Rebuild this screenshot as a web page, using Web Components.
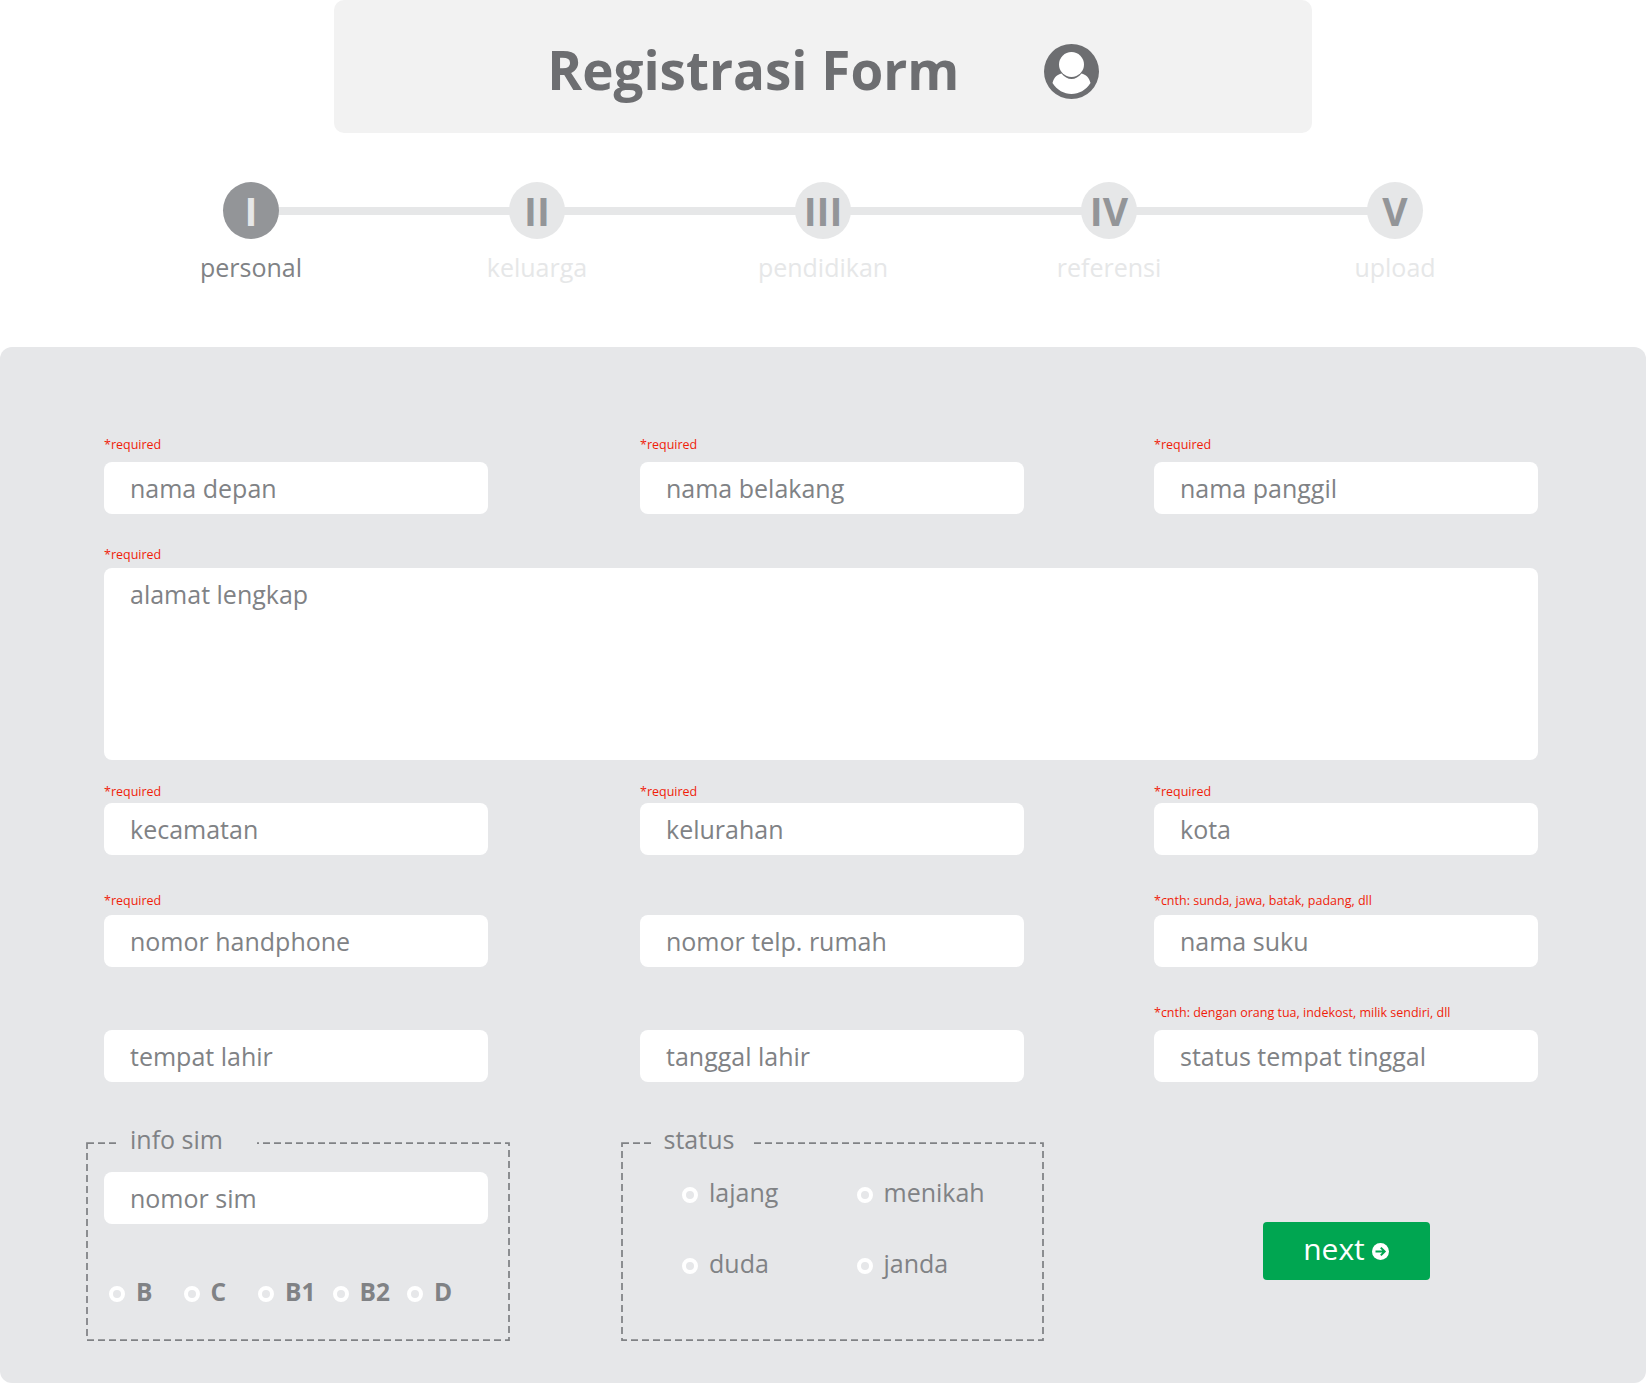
<!DOCTYPE html>
<html lang="id">
<head>
<meta charset="utf-8">
<title>Registrasi Form</title>
<style>
  html, body { margin: 0; background: #fff; }
  body { font-family: "Open Sans", "Liberation Sans", sans-serif; color: #808285; }
</style>
</head>
<body>
<reg-header>Registrasi Form</reg-header>

<reg-stepper>
  <reg-step num="I" active>personal</reg-step>
  <reg-step num="II">keluarga</reg-step>
  <reg-step num="III">pendidikan</reg-step>
  <reg-step num="IV">referensi</reg-step>
  <reg-step num="V">upload</reg-step>
</reg-stepper>

<reg-panel>
  <reg-row style="--row-top: 89px; --hint-gap: 8px">
    <reg-field hint="*required">nama depan</reg-field>
    <reg-field hint="*required">nama belakang</reg-field>
    <reg-field hint="*required">nama panggil</reg-field>
  </reg-row>
  <reg-row style="--row-top: 32px; --hint-gap: 4px">
    <reg-field hint="*required" multiline style="grid-column: 1 / -1">alamat lengkap</reg-field>
  </reg-row>
  <reg-row style="--row-top: 23px; --hint-gap: 2px">
    <reg-field hint="*required">kecamatan</reg-field>
    <reg-field hint="*required">kelurahan</reg-field>
    <reg-field hint="*required">kota</reg-field>
  </reg-row>
  <reg-row style="--row-top: 37px; --hint-gap: 5px">
    <reg-field hint="*required">nomor handphone</reg-field>
    <reg-field>nomor telp. rumah</reg-field>
    <reg-field hint="*cnth: sunda, jawa, batak, padang, dll">nama suku</reg-field>
  </reg-row>
  <reg-row style="--row-top: 37px; --hint-gap: 8px">
    <reg-field>tempat lahir</reg-field>
    <reg-field>tanggal lahir</reg-field>
    <reg-field hint="*cnth: dengan orang tua, indekost, milik sendiri, dll">status tempat tinggal</reg-field>
  </reg-row>
  <reg-row style="--row-top: 61px">
    <reg-group legend="info sim" style="width: 422px; margin-left: -17px; --legend-left: 29px; --legend-pad: 15px 34px 0 14px">
      <reg-field style="margin: 29px 0 0 17px; --hint-h: 0px; --hint-gap: 0px">nomor sim</reg-field>
      <reg-radios style="margin: 50px 0 0 22px; --cols: repeat(5, 74.5px); --dot-gap: 11px">
        <reg-radio bold>B</reg-radio>
        <reg-radio bold>C</reg-radio>
        <reg-radio bold>B1</reg-radio>
        <reg-radio bold>B2</reg-radio>
        <reg-radio bold>D</reg-radio>
      </reg-radios>
    </reg-group>
    <reg-group legend="status" style="width: 421px; margin-left: -18.5px; --legend-left: 30px; --legend-pad: 15px 20px 0 12px">
      <reg-radios style="margin: 31px 0 0 60.5px; --cols: repeat(2, 174.5px); --row-gap: 35px; --dot-gap: 11px">
        <reg-radio>lajang</reg-radio>
        <reg-radio>menikah</reg-radio>
        <reg-radio>duda</reg-radio>
        <reg-radio>janda</reg-radio>
      </reg-radios>
    </reg-group>
    <reg-button style="margin-top: 79px">next</reg-button>
  </reg-row>
</reg-panel>

<script>
class RegHeader extends HTMLElement {
  constructor() {
    super();
    this.attachShadow({ mode: "open" });
    this.shadowRoot.innerHTML = `
      <style>
        :host {
          display: flex;
          align-items: center;
          justify-content: center;
          gap: 84.5px;
          box-sizing: border-box;
          width: 978px;
          height: 133px;
          margin: 0 auto;
          background: #f2f2f2;
          border-radius: 10px;
          color: #6d6e71;
          font: 700 53px/1 "Open Sans", sans-serif;
        }
        .title { position: relative; top: 3px; }
        svg { display: block; width: 55px; height: 55px; position: relative; top: 5px; }
      </style>
      <span class="title"><slot></slot></span>
      <svg viewBox="0 0 55 55">
        <circle cx="27.5" cy="27.5" r="27.5" fill="#6d6e71"/>
        <circle cx="27.5" cy="20.5" r="12.5" fill="#fff"/>
        <path fill="#fff" d="M8.5 39C10 33 13 31 17.5 29.5 20 33 24 35 27.5 35 31 35 35 33 37.5 29.5 42 31 45 33 46.5 39 42 46 35 50 27.5 50 20 50 13 46 8.5 39Z"/>
      </svg>
    `;
  }
}

class RegStepper extends HTMLElement {
  constructor() {
    super();
    this.attachShadow({ mode: "open" });
    this.shadowRoot.innerHTML = `
      <style>
        :host {
          display: grid;
          grid-template-columns: repeat(5, 286px);
          justify-content: center;
          padding-top: 49px;
          height: 165px;
        }
      </style>
      <slot></slot>
    `;
  }
}

class RegStep extends HTMLElement {
  constructor() {
    super();
    this.attachShadow({ mode: "open" });
    this.shadowRoot.innerHTML = `
      <style>
        :host {
          display: flex;
          flex-direction: column;
          align-items: center;
          position: relative;
          color: #e6e7e8;
          font: 400 25px/34px "Open Sans", sans-serif;
        }
        :host([active]) { color: #808285; }
        :host(:not(:last-child))::after {
          content: "";
          position: absolute;
          left: 50%;
          width: 100%;
          top: 25px;
          height: 8px;
          background: #e6e7e8;
        }
        .num {
          position: relative;
          z-index: 1;
          width: 56px;
          height: 57px;
          margin-bottom: 11px;
          border-radius: 50%;
          display: flex;
          align-items: center;
          justify-content: center;
          background: #e6e7e8;
          color: #939598;
          font-size: 39px;
          font-weight: 700;
          line-height: 1;
        }
        :host([active]) .num { background: #939598; color: #e6e7e8; }
      </style>
      <div class="num"></div>
      <div><slot></slot></div>
    `;
    this.shadowRoot.querySelector(".num").textContent = this.getAttribute("num");
  }
}

class RegPanel extends HTMLElement {
  constructor() {
    super();
    this.attachShadow({ mode: "open" });
    this.shadowRoot.innerHTML = `
      <style>
        :host {
          display: block;
          box-sizing: border-box;
          height: 1036px;
          padding: 0 108px 0 104px;
          background: #e6e7e9;
          border-radius: 12px;
          overflow: hidden;
        }
      </style>
      <slot></slot>
    `;
  }
}

class RegRow extends HTMLElement {
  constructor() {
    super();
    this.attachShadow({ mode: "open" });
    this.shadowRoot.innerHTML = `
      <style>
        :host {
          display: grid;
          grid-template-columns: 536px 514px 384px;
          margin-top: var(--row-top, 0);
        }
      </style>
      <slot></slot>
    `;
  }
}

class RegField extends HTMLElement {
  constructor() {
    super();
    this.attachShadow({ mode: "open" });
    this.shadowRoot.innerHTML = `
      <style>
        :host { display: block; width: 384px; }
        :host([multiline]) { width: auto; }
        .hint {
          height: var(--hint-h, 18px);
          margin-bottom: var(--hint-gap, 5px);
          color: #f01e0a;
          font: 400 12.5px/18px "Open Sans", sans-serif;
          white-space: nowrap;
        }
        .box {
          box-sizing: border-box;
          height: 52px;
          padding: 0 26px;
          background: #fff;
          border-radius: 8px;
          color: #808285;
          font: 400 25px/52px "Open Sans", sans-serif;
        }
        :host([multiline]) .box { height: 192px; }
      </style>
      <div class="hint"></div>
      <div class="box"><slot></slot></div>
    `;
    this.shadowRoot.querySelector(".hint").textContent = this.getAttribute("hint") || "";
  }
}

class RegGroup extends HTMLElement {
  constructor() {
    super();
    this.attachShadow({ mode: "open" });
    this.shadowRoot.innerHTML = `
      <style>
        :host { display: block; position: relative; height: 197px; }
        svg { position: absolute; inset: 0; width: 100%; height: 100%; overflow: visible; }
        rect { fill: none; stroke: #808285; stroke-width: 1.75; stroke-dasharray: 7 4; }
        .legend {
          position: absolute;
          left: var(--legend-left, 29px);
          top: -21px;
          box-sizing: border-box;
          padding: var(--legend-pad);
          padding-top: 0;
          background: #e6e7e9;
          color: #808285;
          font: 400 25px/34px "Open Sans", sans-serif;
        }
        .body { position: relative; }
      </style>
      <svg><rect x="0" y="0" width="100%" height="100%"></rect></svg>
      <div class="legend"></div>
      <div class="body"><slot></slot></div>
    `;
    this.shadowRoot.querySelector(".legend").textContent = this.getAttribute("legend");
  }
}

class RegRadios extends HTMLElement {
  constructor() {
    super();
    this.attachShadow({ mode: "open" });
    this.shadowRoot.innerHTML = `
      <style>
        :host {
          display: grid;
          grid-template-columns: var(--cols);
          row-gap: var(--row-gap, 0);
        }
      </style>
      <slot></slot>
    `;
  }
}

class RegRadio extends HTMLElement {
  constructor() {
    super();
    this.attachShadow({ mode: "open" });
    this.shadowRoot.innerHTML = `
      <style>
        :host {
          display: flex;
          align-items: center;
          gap: var(--dot-gap, 12px);
          color: #808285;
          font: 400 25px/36px "Open Sans", sans-serif;
        }
        :host([bold]) { font-weight: 700; font-size: 24.5px; }
        .dot {
          box-sizing: border-box;
          width: 16px;
          height: 16px;
          border: 4.5px solid #fff;
          border-radius: 50%;
          position: relative;
          top: 3px;
        }
        :host([bold]) .dot { top: 2px; }
      </style>
      <span class="dot"></span>
      <span><slot></slot></span>
    `;
  }
}

class RegButton extends HTMLElement {
  constructor() {
    super();
    this.attachShadow({ mode: "open" });
    this.shadowRoot.innerHTML = `
      <style>
        :host {
          display: flex;
          align-items: center;
          justify-content: center;
          gap: 7px;
          justify-self: center;
          align-self: start;
          width: 167px;
          height: 58px;
          background: #00a651;
          border-radius: 4px;
          color: #fff;
          font: 400 30px/1 "Open Sans", sans-serif;
        }
        span { position: relative; top: -2px; }
        svg { display: block; width: 17px; height: 17px; }
      </style>
      <span><slot></slot></span>
      <svg viewBox="0 0 17 17">
        <circle cx="8.5" cy="8.5" r="8.5" fill="#fff"/>
        <path fill="none" stroke="#00a651" stroke-width="2" d="M3.5 8.5h9M8.8 4.6l3.9 3.9-3.9 3.9"/>
      </svg>
    `;
  }
}

customElements.define("reg-header", RegHeader);
customElements.define("reg-stepper", RegStepper);
customElements.define("reg-step", RegStep);
customElements.define("reg-panel", RegPanel);
customElements.define("reg-row", RegRow);
customElements.define("reg-field", RegField);
customElements.define("reg-group", RegGroup);
customElements.define("reg-radios", RegRadios);
customElements.define("reg-radio", RegRadio);
customElements.define("reg-button", RegButton);
</script>
</body>
</html>
